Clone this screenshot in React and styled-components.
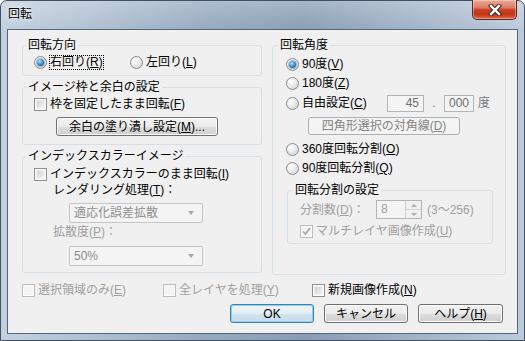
import React from 'react';
import styled, { createGlobalStyle } from 'styled-components';

const GlobalStyle = createGlobalStyle`
  body {
    margin: 0;
    font-family: "Liberation Sans", "Noto Sans CJK JP", sans-serif;
    font-size: 12px;
    color: #000;
  }
`;

const Window = styled.div`
  width: 525px;
  height: 341px;
  box-sizing: border-box;
  border: 1px solid #405164;
  border-radius: 7px 7px 0 0;
  padding: 0 6px 6px;
  display: flex;
  flex-direction: column;
  background:
    linear-gradient(180deg, rgba(255,255,255,0.25) 0%, rgba(255,255,255,0) 30px),
    linear-gradient(90deg, #c3d0de 0%, #aebfd1 18%, #94a8be 40%, #899db5 58%, #9fb2c6 78%, #bccadb 100%);
`;

const TitleBar = styled.div`
  height: 28px;
  display: flex;
  justify-content: space-between;
  align-items: flex-start;
`;

const Title = styled.div`
  margin: 6px 0 0 1px;
  line-height: 14px;
  text-shadow: 0 0 6px rgba(255,255,255,0.9), 0 0 2px rgba(255,255,255,0.8);
`;

const CloseButton = styled.div`
  width: 45px;
  height: 20px;
  box-sizing: border-box;
  margin: -1px 1px 0 0;
  border: 1px solid #5d2a22;
  border-top: none;
  border-radius: 0 0 5px 5px;
  background: linear-gradient(180deg, #eba994 0%, #dc7d64 40%, #c8401f 52%, #c23518 75%, #dc6a4c 100%);
  box-shadow: inset 0 0 0 1px rgba(255,255,255,0.35);
  display: flex;
  align-items: center;
  justify-content: center;
`;

const Client = styled.div`
  flex: 1;
  border: 1px solid #55677b;
  background: #f0f0f0;
  padding: 9px 11px 10px 14px;
  display: flex;
  flex-direction: column;
`;

const MainRow = styled.div`
  display: flex;
  gap: 10px;
  align-items: flex-start;
`;

const Column = styled.div`
  width: 240px;
  display: flex;
  flex-direction: column;
  gap: 5px;
`;

const Group = styled.fieldset`
  margin: ${p => p.$margin || '0'};
  min-width: 0;
  box-sizing: border-box;
  border: 1px solid #d5dfe5;
  border-radius: 3px;
  padding: 0;
  width: ${p => (p.$w ? `${p.$w}px` : 'auto')};
  height: ${p => (p.$h ? `${p.$h}px` : 'auto')};
`;

const Legend = styled.legend`
  margin-left: ${p => p.$ml || 3}px;
  padding: 0 2px;
  line-height: 12px;
  height: 12px;
`;

const Body = styled.div`
  padding: ${p => p.$pad};
  display: flex;
  flex-direction: column;
  align-items: flex-start;
`;

const Row = styled.div`
  display: flex;
  align-items: center;
  height: ${p => p.$h || 14}px;
  margin-top: ${p => p.$mt || 0}px;
  margin-left: ${p => p.$ml || 0}px;
`;

const Option = styled.label`
  display: flex;
  align-items: center;
  gap: 2px;
  flex: none;
  width: ${p => (p.$w ? `${p.$w}px` : 'auto')};
  color: ${p => (p.$disabled ? '#a0a0a0' : '#000')};
`;

const Caption = styled.span`
  border: 1px dotted ${p => (p.$focus ? '#000' : 'transparent')};
  line-height: 13px;
  white-space: nowrap;
`;

const Radio = styled.span`
  width: 13px;
  height: 13px;
  box-sizing: border-box;
  flex: none;
  border-radius: 50%;
  border: 1px solid #8a8c8e;
  background: radial-gradient(circle at 35% 30%, #ffffff 0%, #f0f0f0 35%, #d2d4d6 85%, #c4c6c8 100%);
  display: grid;
  place-items: center;
  &::after {
    content: '';
    display: ${p => (p.$checked ? 'block' : 'none')};
    width: 7px;
    height: 7px;
    border-radius: 50%;
    background: radial-gradient(circle at 40% 35%, #b5e3fd 0%, #4d9bd6 40%, #14528a 85%, #0d3e6b 100%);
    box-shadow: 0 0 0 1px rgba(40, 90, 140, 0.35);
  }
`;

const Check = styled.span`
  width: 13px;
  height: 13px;
  box-sizing: border-box;
  flex: none;
  border: 1px solid ${p => (p.$disabled ? '#bcbcbc' : '#8e8f8f')};
  background: ${p =>
    p.$disabled ? '#f4f4f4' : 'linear-gradient(135deg, #c9ccd0 0%, #e2e3e5 50%, #f9f9f9 100%)'};
  box-shadow: inset 0 0 0 1px #fbfbfb, inset 0 0 0 2px ${p => (p.$disabled ? '#f4f4f4' : 'rgba(255,255,255,0.5)')};
  display: grid;
  place-items: center;
`;

const Text = styled.span`
  line-height: 14px;
  white-space: nowrap;
  width: ${p => (p.$w ? `${p.$w}px` : 'auto')};
  color: ${p => p.$color || (p.$disabled ? '#a0a0a0' : '#000')};
  margin-left: ${p => p.$ml || 0}px;
`;

const Button = styled.div`
  box-sizing: border-box;
  width: ${p => p.$w}px;
  height: ${p => p.$h || 19}px;
  margin-top: ${p => p.$mt || 0}px;
  margin-left: ${p => p.$ml || 0}px;
  border-radius: 3px;
  display: flex;
  align-items: center;
  justify-content: center;
  white-space: nowrap;
  line-height: 14px;
  border: 1px solid ${p => (p.$default ? '#3c7fb1' : p.$disabled ? '#adb2b5' : '#707070')};
  color: ${p => (p.$disabled ? '#838383' : '#000')};
  background: ${p =>
    p.$disabled
      ? '#f4f4f4'
      : p.$default
      ? 'linear-gradient(180deg, #eef5fa 0%, #e3edf5 50%, #d3e3ef 51%, #c6dbeb 100%)'
      : 'linear-gradient(180deg, #f2f2f2 0%, #ebebeb 50%, #dddddd 51%, #cfcfcf 100%)'};
  box-shadow: ${p =>
    p.$disabled ? 'none' : p.$default ? 'inset 0 0 0 1px #8fd0f3' : 'inset 0 0 0 1px #fcfcfc'};
`;

const Select = styled.div`
  box-sizing: border-box;
  width: 134px;
  height: 20px;
  margin-top: ${p => p.$mt || 0}px;
  margin-left: ${p => p.$ml || 0}px;
  border: 1px solid #c3c6c9;
  border-radius: 2px;
  background: #f4f4f4;
  color: #8d8d8d;
  display: flex;
  align-items: center;
  justify-content: space-between;
  padding: 0 8px 0 4px;
  line-height: 14px;
`;

const Arrow = styled.span`
  width: 0;
  height: 0;
  border-left: 3.5px solid transparent;
  border-right: 3.5px solid transparent;
  border-top: 4px solid #a8a8a8;
`;

const Input = styled.div`
  box-sizing: border-box;
  width: ${p => p.$w}px;
  height: 17px;
  border: 1px solid #b5b5b5;
  background: #f4f4f4;
  color: #6d6d6d;
  display: flex;
  align-items: center;
  justify-content: ${p => (p.$right ? 'flex-end' : 'flex-start')};
  padding: 0 4px;
  line-height: 14px;
`;

const Dot = styled.span`
  width: 20px;
  text-align: center;
  color: #6d6d6d;
`;

const Spin = styled.div`
  box-sizing: border-box;
  width: 46px;
  height: 19px;
  border: 1px solid #b5b5b5;
  background: #f4f4f4;
  display: flex;
  align-items: stretch;
  padding-left: 4px;
`;

const SpinValue = styled.span`
  flex: 1;
  line-height: 17px;
  color: #a0a0a0;
`;

const SpinButtons = styled.div`
  width: 15px;
  display: flex;
  flex-direction: column;
  border-left: 1px solid #d0d0d0;
`;

const SpinPart = styled.div`
  flex: 1;
  display: grid;
  place-items: center;
  background: #f0f0f0;
  border-bottom: ${p => (p.$top ? '1px solid #d6d6d6' : 'none')};
  &::after {
    content: '';
    border-left: 3px solid transparent;
    border-right: 3px solid transparent;
    ${p => (p.$top ? 'border-bottom: 3px solid #b0b0b0;' : 'border-top: 3px solid #b0b0b0;')}
  }
`;

const Footer = styled.div`
  display: grid;
  grid-template-columns: 141px 149px auto;
  height: 14px;
  margin-top: 8px;
  align-items: center;
`;

const ButtonBar = styled.div`
  display: flex;
  justify-content: flex-end;
  gap: 10px;
  margin-top: 7px;
  margin-right: 3px;
`;

const M = ({ k }) => <u>{k}</u>;

const RadioOption = ({ checked, focus, w, children }) => (
  <Option $w={w}>
    <Radio $checked={checked} />
    <Caption $focus={focus}>{children}</Caption>
  </Option>
);

const CheckMark = () => (
  <svg width="9" height="9" viewBox="0 0 9 9">
    <path d="M1 4.5 L3.5 7 L8 1" fill="none" stroke="#a8a8a8" strokeWidth="1.7" />
  </svg>
);

const CheckOption = ({ disabled, checked, w, children }) => (
  <Option $disabled={disabled} $w={w}>
    <Check $disabled={disabled}>{checked && <CheckMark />}</Check>
    <Caption>{children}</Caption>
  </Option>
);

export default function App() {
  return (
    <>
      <GlobalStyle />
      <Window>
        <TitleBar>
          <Title>回転</Title>
          <CloseButton>
            <svg width="14" height="12" viewBox="0 0 14 12">
              <path d="M3 2 L11 10 M11 2 L3 10" stroke="#3b2a28" strokeWidth="4.4" strokeLinecap="square" />
              <path d="M3 2 L11 10 M11 2 L3 10" stroke="#ffffff" strokeWidth="2.4" strokeLinecap="square" />
            </svg>
          </CloseButton>
        </TitleBar>
        <Client>
          <MainRow>
            <Column>
              <Group>
                <Legend>回転方向</Legend>
                <Body $pad="4px 0 6px 11px">
                  <Row>
                    <RadioOption checked focus w={96}>右回り(<M k="R" />)</RadioOption>
                    <RadioOption>左回り(<M k="L" />)</RadioOption>
                  </Row>
                </Body>
              </Group>
              <Group>
                <Legend>イメージ枠と余白の設定</Legend>
                <Body $pad="4px 0 8px 11px">
                  <Row>
                    <CheckOption>枠を固定したまま回転(<M k="F" />)</CheckOption>
                  </Row>
                  <Button $w={162} $mt={6} $ml={22}>余白の塗り潰し設定(<M k="M" />)...</Button>
                </Body>
              </Group>
              <Group>
                <Legend>インデックスカラーイメージ</Legend>
                <Body $pad="5px 0 6px 11px">
                  <Row>
                    <CheckOption>インデックスカラーのまま回転(<M k="I" />)</CheckOption>
                  </Row>
                  <Row $mt={2}>
                    <Text $ml={19}>レンダリング処理(<M k="T" />)：</Text>
                  </Row>
                  <Select $mt={6} $ml={35}>
                    <span>適応化誤差拡散</span>
                    <Arrow />
                  </Select>
                  <Row $mt={2}>
                    <Text $ml={19} $disabled>拡散度(<M k="P" />)：</Text>
                  </Row>
                  <Select $mt={7} $ml={35}>
                    <span>50%</span>
                    <Arrow />
                  </Select>
                </Body>
              </Group>
            </Column>
            <Group $w={234} $h={236}>
              <Legend $ml={5}>回転角度</Legend>
              <Body $pad="4px 0 0 13px">
                <Row $h={19}>
                  <RadioOption checked>90度(<M k="V" />)</RadioOption>
                </Row>
                <Row $h={19}>
                  <RadioOption>180度(<M k="Z" />)</RadioOption>
                </Row>
                <Row $h={20}>
                  <RadioOption w={101}>自由設定(<M k="C" />)</RadioOption>
                  <Input $w={37} $right>45</Input>
                  <Dot>.</Dot>
                  <Input $w={30}>000</Input>
                  <Text $ml={4} $color="#7a7a7a">度</Text>
                </Row>
                <Button $w={152} $h={18} $mt={4} $ml={22} $disabled>四角形選択の対角線(<M k="D" />)</Button>
                <Row $h={19} $mt={5}>
                  <RadioOption>360度回転分割(<M k="O" />)</RadioOption>
                </Row>
                <Row $h={19}>
                  <RadioOption>90度回転分割(<M k="Q" />)</RadioOption>
                </Row>
                <Group $w={206} $margin="6px 0 0 1px">
                  <Legend $ml={5}>回転分割の設定</Legend>
                  <Body $pad="4px 0 5px 12px">
                    <Row $h={19}>
                      <Text $disabled $w={76}>分割数(<M k="D" />)：</Text>
                      <Spin>
                        <SpinValue>8</SpinValue>
                        <SpinButtons>
                          <SpinPart $top />
                          <SpinPart />
                        </SpinButtons>
                      </Spin>
                      <Text $disabled $ml={5}>(3～256)</Text>
                    </Row>
                    <Row $mt={5}>
                      <CheckOption disabled checked>マルチレイヤ画像作成(<M k="U" />)</CheckOption>
                    </Row>
                  </Body>
                </Group>
              </Body>
            </Group>
          </MainRow>
          <Footer>
            <CheckOption disabled>選択領域のみ(<M k="E" />)</CheckOption>
            <CheckOption disabled>全レイヤを処理(<M k="Y" />)</CheckOption>
            <CheckOption>新規画像作成(<M k="N" />)</CheckOption>
          </Footer>
          <ButtonBar>
            <Button $w={84} $default>OK</Button>
            <Button $w={84}>キャンセル</Button>
            <Button $w={85}>ヘルプ(<M k="H" />)</Button>
          </ButtonBar>
        </Client>
      </Window>
    </>
  );
}
